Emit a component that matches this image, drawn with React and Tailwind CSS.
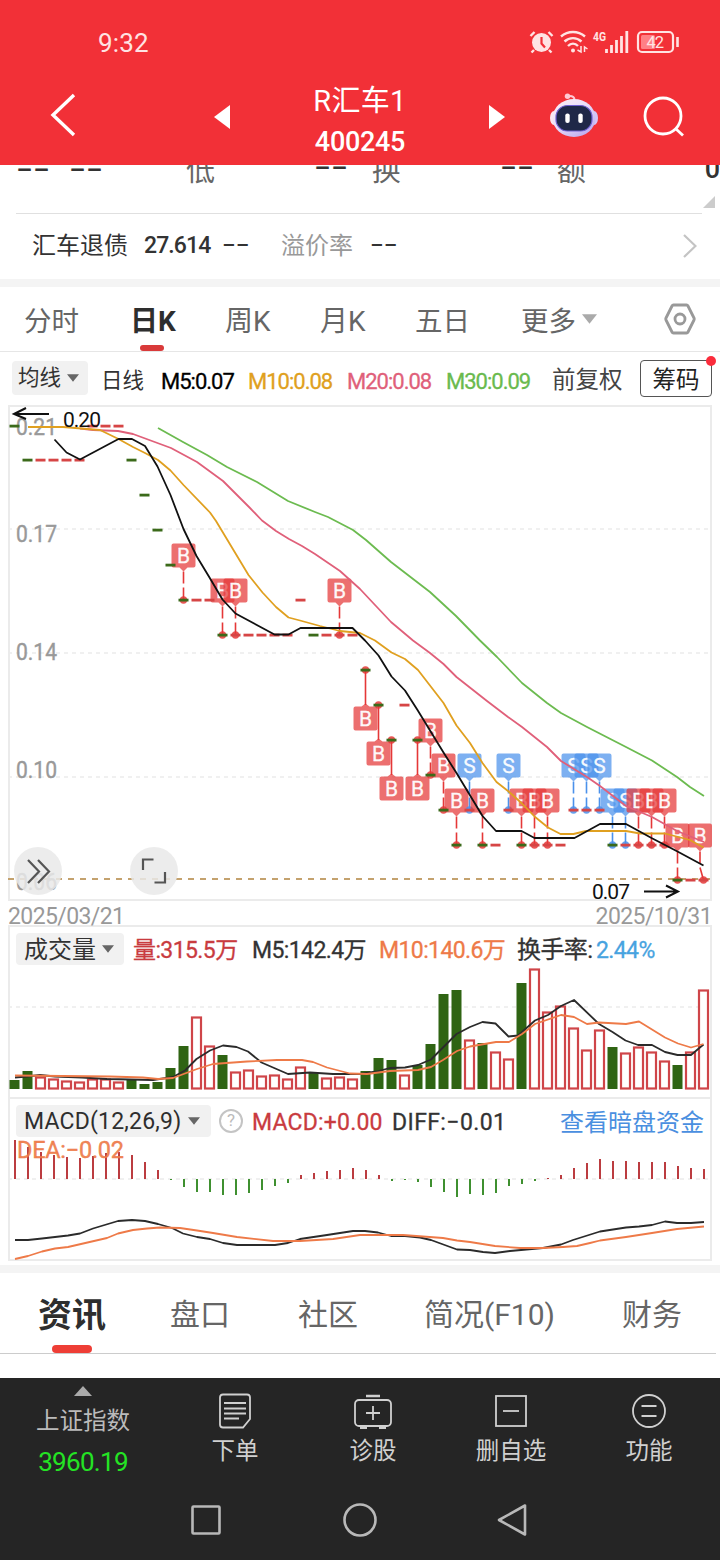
import React from 'react';
import clsx from 'clsx';

const RED = '#d64545';
const GREEN = '#2f6413';

// one candle every 13px
const X = (i) => 14.5 + i * 13;

// [price level y, colour, marker]
const candles = [
  [426, 'g'], [460, 'g'], [460, 'r'], [460, 'r'], [460, 'r'], [460, 'r'], [426, 'r'], [426, 'r'], [426, 'r'],
  [460, 'g'], [495, 'g'], [530, 'g'], [565, 'g'], [600, 'g', 'B'], [600, 'r'], [600, 'r'], [635, 'g', 'B'],
  [635, 'r', 'B'], [635, 'r'], [635, 'r'], [635, 'r'], [635, 'r'], [600, 'r'], [635, 'g'], [635, 'r'],
  [635, 'r', 'B'], [635, 'r'], [670, 'g', 'b'], [705, 'g', 'b'], [740, 'g', 'b'], [705, 'r'], [740, 'g', 'b'],
  [775, 'g', 'B'], [810, 'g', 'B'], [845, 'g', 'B'], [810, 'r', 'S'], [845, 'g', 'B'], [845, 'r'], [810, 'r', 'S'],
  [845, 'g', 'B'], [845, 'r', 'B'], [845, 'r', 'B'], [845, 'r'], [810, 'r', 'S'], [810, 'r', 'S'], [810, 'r', 'S'],
  [845, 'g', 'S'], [845, 'r', 'S'], [845, 'r', 'B'], [845, 'r', 'B'], [845, 'r', 'B'], [880, 'g', 'B'], [880, 'r'],
  [880, 'r', 'B']
];

const priceLines = [
  {
    color: '#6cbb50',
    points: '158,428 183,442 207,455 227,467 257,482 288,501 315,512 328,517 353,530 366,540 391,562 430,592 456,616 480,640.5 497,657 522,683 547,703 561,713 587,727 626,747 652,760.5 677,777 690,787 704,796'
  },
  {
    color: '#e0607a',
    points: '80,428.5 93,430 118,431 133,434 171,448 197,462 223,481 250,508 262,520.5 276,531 289,539 302,546 315,554 340,571 360,589 391,622 413,640.5 430,653 443.5,664 456.5,677 487,701 508,717 522,727 547,747 561,761 587,777 600,786 626,806 652,817 677,831 704,842'
  },
  {
    color: '#e0a020',
    points: '28,427 63,427 100,430 118.5,439 133,447 145,453 158,460 170.5,470.5 183.5,485 210,512.5 216,521 248.5,575 262.5,592.5 276,607 288.5,617.5 300,620.5 320,626 340,631 360,633 375,640.5 391.5,652.5 405,659 418,670 443.5,703 456.5,725.5 470,743 482.5,763 496.5,782 508,791 521.5,803 534.5,816.5 548,827.5 560.5,834 573.5,834 586,831 626,831 640,833.5 665,833.5 690,840 703.5,847.5'
  },
  {
    color: '#111111',
    points: '54.5,439.5 66.5,452.5 80,459.5 118.5,439 132,439 145,446 157.5,466.5 170.5,495 183.5,529 196.5,556 209.5,577.5 222.5,599.5 235.5,613.5 274.5,634.5 288.5,634.5 300.5,628 352.5,628 365,640.5 378.5,655.5 391.5,676.5 405,690.5 417.5,710 443.5,752.5 456.5,773 482.5,816 496,831 521.5,831 534.5,838 574.5,838 600,824 626,824 651.5,838 677.5,851.5 703.5,865.5'
  }
];

const volumes = [
  [1080, 'g'], [1071, 'g'], [1077, 'r'], [1079, 'r'], [1081, 'r'], [1082, 'r'], [1079, 'r'], [1079, 'r'], [1082, 'r'],
  [1080, 'g'], [1084, 'g'], [1082, 'g'], [1068, 'g'], [1046, 'g'], [1017, 'r'], [1046, 'r'], [1055, 'g'], [1072, 'r'],
  [1070, 'r'], [1076, 'r'], [1075, 'r'], [1079, 'r'], [1067, 'r'], [1073, 'g'], [1078, 'r'], [1077, 'r'], [1079, 'r'],
  [1071, 'g'], [1058, 'g'], [1060, 'g'], [1075, 'r'], [1065, 'g'], [1044, 'g'], [994, 'g'], [990, 'g'], [1040, 'r'],
  [1043, 'g'], [1052, 'r'], [1059, 'r'], [983, 'g'], [969, 'r'], [1012, 'r'], [1006, 'r'], [1028, 'r'], [1050, 'r'],
  [1030, 'r'], [1047, 'g'], [1053, 'r'], [1047, 'r'], [1052, 'r'], [1061, 'r'], [1065, 'g'], [1052, 'r'], [990, 'r']
];

const macdBars = [
  1140, 1147, 1152, 1155, 1157, 1158, 1156, 1153, 1152, 1155, 1162, 1170, 1180, 1187, 1192, 1192, 1195, 1195, 1193,
  1190, 1186, 1183, 1175, 1173, 1171, 1170, 1168, 1170, 1175, 1181, 1180, 1182, 1187, 1192, 1197, 1194, 1195, 1193,
  1186, 1184, 1181, 1178, 1175, 1168, 1163, 1159, 1161, 1161, 1162, 1162, 1162, 1166, 1168, 1169
];

const Line = ({ points, color }) => (
  <polyline points={points} fill="none" stroke={color} strokeWidth="1.8" strokeLinejoin="round" />
);

const Marker = ({ x, y, type }) => {
  const below = type === 'b';
  const color = type === 'S' ? '#4b91eb' : '#e53838';
  const bx = x > 700 ? 700 : x;
  const by = below ? y + 48.5 : y - 44.5;
  return (
    <g>
      {below ? (
        <line x1={x} y1={y} x2={x} y2={y + 35} stroke={color} strokeWidth="1.6" />
      ) : (
        <path d={`M${bx} ${by + 16} L${bx} ${by + 28} M${bx} ${by + 32} L${x} ${y}`} stroke={color} strokeWidth="1.6" />
      )}
      <circle cx={x} cy={y} r="3.7" fill={color} opacity="0.85" />
      <g fill={color} fillOpacity="0.72">
        <path
          d={
            below
              ? `M${bx - 10} ${by - 12}h6l4 -3l4 3h6a2 2 0 0 1 2 2v20a2 2 0 0 1 -2 2h-20a2 2 0 0 1 -2 -2v-20a2 2 0 0 1 2 -2z`
              : `M${bx - 10} ${by - 12}h20a2 2 0 0 1 2 2v20a2 2 0 0 1 -2 2h-6l-4 4l-4 -4h-6a2 2 0 0 1 -2 -2v-20a2 2 0 0 1 2 -2z`
          }
        />
      </g>
      <text x={bx} y={by + 7.5} textAnchor="middle" fontSize="21" fill="#fff" stroke="#fff" strokeWidth="0.3" fillOpacity="0.95">
        {type.toUpperCase()}
      </text>
    </g>
  );
};

const PriceChart = () => (
  <svg viewBox="10 407 700 492" className="block h-[492px] w-[700px] overflow-visible">
    {[529, 653, 777].map((y) => (
      <line key={y} x1="8" x2="710" y1={y} y2={y} stroke="#ebebeb" strokeWidth="1.6" strokeDasharray="4 4" />
    ))}
    <line x1="8" x2="710" y1="879" y2="879" stroke="#c4a26e" strokeWidth="1.8" strokeDasharray="6 6" />
    <g fill="#999" stroke="#999" strokeWidth="0.4" fontSize="23">
      <text x="16" y="434.5" textLength="41" lengthAdjust="spacingAndGlyphs">0.21</text>
      <text x="16" y="541.5" textLength="41" lengthAdjust="spacingAndGlyphs">0.17</text>
      <text x="16" y="659.5" textLength="41" lengthAdjust="spacingAndGlyphs">0.14</text>
      <text x="16" y="777.5" textLength="41" lengthAdjust="spacingAndGlyphs">0.10</text>
      <text x="16" y="889.5" textLength="41" lengthAdjust="spacingAndGlyphs">0.06</text>
    </g>
    {candles.map(([y, c, m], i) => m && <Marker key={i} x={X(i)} y={y} type={m} />)}
    {candles.map(([y, c], i) => (
      <rect key={i} x={X(i) - 5} y={y - 1.3} width="10" height="2.8" fill={c === 'g' ? '#3b6a1a' : RED} />
    ))}
    {priceLines.map((l) => (
      <Line key={l.color} {...l} />
    ))}
    <g fontSize="21" fill="#111">
      <text x="63" y="427" textLength="38">0.20</text>
      <text x="592" y="899" textLength="38">0.07</text>
    </g>
    <g fill="none" stroke="#111" strokeWidth="2">
      <path d="M49 414H15M26 408L14 414l12 5" />
      <path d="M644 891.500H677M666 885.500l12 6l-12 6" />
    </g>
    <circle cx="38" cy="871" r="24" fill="#e9e9e9" fillOpacity="0.85" />
    <circle cx="154" cy="871" r="24" fill="#e9e9e9" fillOpacity="0.85" />
    <g fill="none" stroke="#555" strokeWidth="2.2">
      <path d="M28 860l11 11.500L28 883M38 860l11 11.500L38 883" />
      <path d="M143 870v-10.500h10.500M165 872v10.500h-10.500" />
    </g>
  </svg>
);

const VolumeChart = () => (
  <svg viewBox="10 967 700 130" className="block h-[130px] w-[700px] overflow-visible">
    <line x1="8" x2="710" y1="1007" y2="1007" stroke="#ebebeb" strokeWidth="1.6" strokeDasharray="4 4" />
    {volumes.map(([y, c], i) =>
      c === 'g' ? (
        <rect key={i} x={X(i) - 5} y={y} width="10" height={1089 - y} fill={GREEN} />
      ) : (
        <rect key={i} x={X(i) - 4.5} y={y + 0.5} width="9" height={1088 - y} fill="#fff" stroke="#cf4549" strokeWidth="2.2" />
      )
    )}
    <Line
      color="#2b2b2b"
      points="15,1077.500 27,1076.500 40,1075 55,1076.500 82,1077.500 107,1079 153,1080 173,1077 185,1070.500 196.500,1059 210,1050.500 223,1045.500 236.500,1047 248,1051.500 261.500,1062.500 288,1074 310,1072.500 333,1074 360,1074 376.500,1071.500 390,1068 405,1067.500 418,1065 431,1059.500 456.500,1034 470,1027 482.500,1022 495.500,1023.500 508.500,1036.500 518,1035.500 535,1020.500 548,1015 561,1006 574,1000 599,1024 612.500,1032 625.500,1040.500 638,1045 652,1045 665,1052 677.500,1055 691,1055 703.500,1044.500"
    />
    <Line
      color="#ee7a48"
      points="15,1075.500 110,1076.500 143,1077.500 158,1079 173,1078 197,1069 213,1064 247,1061.500 277,1060 302,1060 313,1062 327,1067.500 350,1073.500 367,1074 390,1071 418,1070 431,1067 443,1060 457,1051 470,1046.500 496,1042 509,1042 522,1034 535,1024 561,1015 574,1017 587,1024 599,1022.500 626,1024 639,1021.500 665,1037.500 678,1043.500 691,1047.500 703.500,1044"
    />
  </svg>
);

const MacdChart = () => (
  <svg viewBox="10 1137 700 122" className="block h-[122px] w-[700px] overflow-visible">
    <line x1="8" x2="710" y1="1179" y2="1179" stroke="#ebebeb" strokeWidth="1.6" strokeDasharray="4 4" />
    {macdBars.map((y, i) => (
      <rect
        key={i}
        x={X(i) - 0.5}
        y={Math.min(y, 1179)}
        width="2"
        height={Math.abs(1179 - y)}
        fill={y > 1179 ? '#3f9030' : '#bb3c40'}
      />
    ))}
    <text x="17" y="1157.500" fontSize="23.500" fill="#ee7a48" stroke="#ee7a48" strokeWidth="0.4" fillOpacity="0.93" textLength="107">DEA:−0.02</text>
    <Line
      color="#2b2b2b"
      points="15,1240 28,1240 42,1238.500 55,1237 68,1235.500 80,1233.500 93,1228.500 118,1221 132,1220 145,1221 158,1224 172,1228 183,1233.500 197,1237 210,1239 223,1243 237,1245 275,1245 288,1243 300,1239 327,1235 353,1231 365,1231 378,1232.500 391,1236 405,1236 420,1237.500 431,1240 457,1249.500 470,1250 483,1252 495,1253 510,1251 543,1248 561,1244.500 573,1240 600,1231.500 626,1227.500 639,1226.500 652,1225 665,1221.500 677,1223 691,1223 704,1222"
    />
    <Line
      color="#ee7a48"
      points="15,1259 28,1256 42,1251.500 55,1248.500 68,1247 107,1238 118,1233.500 133,1230 147,1228.500 160,1227.500 180,1228 197,1230.500 213,1233 237,1237 273,1241 300,1241 333,1239 360,1235 403,1235 443,1238 457,1240.500 470,1242 495,1246 520,1248 543,1248 563,1247 577,1246 590,1243 600,1240.500 626,1237 652,1233 677,1229 704,1226.500"
    />
  </svg>
);

const Caret = ({ className }) => (
  <svg viewBox="0 0 14 10" className={clsx('shrink-0', className)} fill="currentColor">
    <path d="M0 .5h14L7 9.500z" />
  </svg>
);

const StatusBar = () => (
  <div className="flex h-20 items-start pt-[27px] text-[#ffe3e3]">
    <span className="ml-[98px] w-[431px] text-[26px] leading-[32px] tracking-[0.2px]">9:32</span>
    <svg viewBox="0 0 150 24" className="mt-[3px] h-6 w-[150px]" fill="none" stroke="currentColor">
      {/* alarm */}
      <circle cx="12.500" cy="12.500" r="9.500" fill="currentColor" stroke="none" />
      <path d="M1.500 6l4-4M23.500 6l-4-4M5 20l-2.500 2.500M20 20l2.500 2.500" strokeWidth="2.400" />
      <path d="M12.500 7v6.500l3.500 4" stroke="#f23037" strokeWidth="2.200" />
      {/* wifi */}
      <path d="M32 6.500c7-6 17-6 24 0M35.500 11.500c5-4.500 12-4.500 17 0M39 16c3-3 7-3 10 0" strokeWidth="2.400" />
      <circle cx="44" cy="20.500" r="2" fill="currentColor" stroke="none" />
      <path d="M52 16v6l-3.500-2M55.500 22v-5l3 2" strokeWidth="1.500" />
      <text x="64" y="10.500" fontSize="12.500" fontWeight="700" fill="currentColor" stroke="none" textLength="13" lengthAdjust="spacingAndGlyphs">4G</text>
      <path d="M77.500 19v4M82.500 15v8M87.500 10v13M92.500 6v17M97.800 1v22" strokeWidth="2.800" />
      <rect x="109" y="2" width="35" height="20" rx="4" strokeWidth="2.200" />
      <rect x="112" y="5" width="14" height="14" rx="1.500" fill="#ff8085" stroke="none" />
      <path d="M148.500 7v10" strokeWidth="2.600" />
      <text x="117.500" y="18" fontSize="16.500" fill="currentColor" stroke="none" textLength="17.500">42</text>
    </svg>
  </div>
);

const RobotIcon = () => (
  <svg viewBox="0 0 48 46" className="ml-[45px] h-[46px] w-12 shrink-0">
    <defs>
      <linearGradient id="shell" x1="0" y1="0" x2="0.8" y2="1">
        <stop offset="0" stopColor="#fff0f3" />
        <stop offset="0.5" stopColor="#e8dcfa" />
        <stop offset="1" stopColor="#bba8ee" />
      </linearGradient>
    </defs>
    <path d="M24.500 7c0-3-2-4-5-4" fill="none" stroke="#ffc9d4" strokeWidth="2" />
    <circle cx="17.500" cy="3.200" r="2.700" fill="#ffc9d4" />
    <ellipse cx="4" cy="25" rx="4" ry="7" fill="#fbe6f0" />
    <ellipse cx="44" cy="25" rx="4" ry="7" fill="#d3c4f6" />
    <ellipse cx="24" cy="25" rx="21.500" ry="19" fill="url(#shell)" />
    <rect x="6" y="12.500" width="36" height="25.500" rx="11.500" fill="#1f2848" stroke="#6f5fd0" strokeWidth="1.200" />
    <rect x="15.300" y="20.500" width="4.400" height="9.500" rx="2" fill="#fff" />
    <rect x="28.300" y="20.500" width="4.400" height="9.500" rx="2" fill="#fff" />
  </svg>
);

const NavBar = () => (
  <div className="flex h-[85px] items-start text-white">
    <svg viewBox="0 0 26 44" className="ml-[50px] mt-[13px] h-11 w-[26px]" fill="none" stroke="currentColor" strokeWidth="3.400">
      <path d="M24 2L3 22l21 20" />
    </svg>
    <svg viewBox="0 0 16 24" className="ml-[138px] mt-[25px] h-6 w-4" fill="currentColor">
      <path d="M16 0v24L0 12z" />
    </svg>
    <div className="ml-[30px] flex w-[200px] flex-col items-center pt-[1px]">
      <span className="text-[29px] leading-[40px] tracking-[0.3px]">R汇车1</span>
      <span className="mt-px text-[27px] font-medium leading-[40px] tracking-[-0.3px]">400245</span>
    </div>
    <svg viewBox="0 0 16 24" className="ml-[29px] mt-[25px] h-6 w-4" fill="currentColor">
      <path d="M0 0v24l16-12z" />
    </svg>
    <div className="mt-[13px] flex items-start">
      <RobotIcon />
    </div>
    <svg viewBox="0 0 42 42" className="ml-[45px] mt-[16px] h-[42px] w-[42px]" fill="none" stroke="currentColor" strokeWidth="2.800">
      <circle cx="20" cy="20" r="18" />
      <path d="M32.500 32.500l7.500 7" />
    </svg>
  </div>
);

const Dash = ({ className }) => (
  <span className={clsx('inline-block origin-left scale-x-[1.6] whitespace-nowrap font-[Liberation_Sans]', className)}>--</span>
);

const StatsRow = () => (
  <div className="flex h-12 items-start overflow-hidden text-[29px] leading-[40px] text-[#666]">
    <div className="-mt-[18px] flex w-full items-start whitespace-nowrap">
      <Dash className="ml-[16px] w-[53px] text-[32px] text-[#333]" />
      <Dash className="w-[117px] text-[32px] text-[#333]" />
      <span className="mt-1 w-[128px]">低</span>
      <Dash className="-mt-0.5 w-[58px] text-[32px] text-[#333]" />
      <span className="mt-1 w-[128px]">换</span>
      <Dash className="-mt-0.5 w-[57px] text-[32px] text-[#333]" />
      <span className="mt-1 w-[148px]">额</span>
      <span className="mt-0.5 text-[27px] font-medium text-[#333]">0</span>
    </div>
    <svg viewBox="0 0 12 12" className="-ml-[17px] mt-[31px] h-3 w-3 shrink-0" fill="#ccc">
      <path d="M12 0v12H0z" />
    </svg>
  </div>
);

const BondRow = () => (
  <div className="flex h-[65px] items-center whitespace-nowrap pb-0.5 text-2xl text-[#333]">
    <span className="ml-8 w-[112px]">汇车退债</span>
    <span className="mt-0.5 w-[78px] text-[23px] font-medium tracking-[-0.9px]">27.614</span>
    <Dash className="-mt-1 w-[59px] text-[26px]" />
    <span className="w-[89px] text-[#999]">溢价率</span>
    <Dash className="-mt-1 text-[26px]" />
    <svg viewBox="0 0 14 24" className="ml-auto mr-[23px] h-6 w-[14px]" fill="none" stroke="#c4c4c4" strokeWidth="2.200">
      <path d="M1 1l11.500 11L1 23" />
    </svg>
  </div>
);

const PeriodTabs = () => (
  <div className="flex h-[65px] items-start whitespace-nowrap border-b border-[#e6e6e6] pt-[15px] text-[27.500px] leading-[40px] text-[#666]">
    <span className="ml-[24px] w-[106px]">分时</span>
    <div className="relative w-[95px] text-[28px] font-bold text-[#2e2e2e]">
      日K
      <div className="absolute left-[10px] top-[43px] h-1.5 w-6 rounded-full bg-[#d93a3a]" />
    </div>
    <span className="w-[95px] text-[28px]">周K</span>
    <span className="w-[95px] text-[28px]">月K</span>
    <span className="w-[106px]">五日</span>
    <span className="w-[61px]">更多</span>
    <Caret className="mt-[10px] h-[14px] w-[15px] text-[#aaa]" />
    <svg viewBox="0 0 32 32" className="ml-[67px] mt-px h-8 w-8" fill="none" stroke="#999" strokeWidth="2.800">
      <path d="M9.500 2h13q1 0 1.500 1l6 12q.5 1 0 2l-6 12q-.5 1-1.500 1h-13q-1 0-1.500-1l-6-12q-.5-1 0-2l6-12q.5-1 1.500-1z" />
      <circle cx="16" cy="16" r="5" />
    </svg>
  </div>
);

const AverageRow = () => (
  <div className="flex h-[53px] items-center whitespace-nowrap pt-0.5 text-[22px] tracking-[-1px]">
    <div className="-mt-1 ml-3 flex h-[34px] w-[76px] items-center rounded-sm bg-[#f1f1f1] pl-1.5 text-[21.500px] tracking-normal text-[#333]">
      <span className="mt-0.5">均线</span>
      <Caret className="ml-1.5 h-2.5 w-3 text-[#666]" />
    </div>
    <span className="ml-[13px] mt-1 w-[60px] text-[21.500px] tracking-normal text-[#333]">日线</span>
    <span className="mt-1 w-[87px] text-black [-webkit-text-stroke:0.3px]">M5:0.07</span>
    <span className="mt-1 w-[99px] text-[#e0a020] [-webkit-text-stroke:0.3px]">M10:0.08</span>
    <span className="mt-1 w-[99px] text-[#e0607a] [-webkit-text-stroke:0.3px]">M20:0.08</span>
    <span className="mt-1 w-[106px] text-[#6aba4e] [-webkit-text-stroke:0.3px]">M30:0.09</span>
    <span className="mt-0.5 w-[88px] text-[23.500px] tracking-normal text-[#444]">前复权</span>
    <div className="relative -mt-0.5 flex h-[37px] w-[72px] items-center justify-center rounded border border-[#555] text-[23.500px] tracking-normal text-[#222]">
      <span className="mt-1">筹码</span>
      <div className="absolute -right-[5px] -top-[5px] h-2.5 w-2.5 rounded-full bg-[#fb2c3c]" />
    </div>
  </div>
);

const VolumePanel = () => (
  <div className="mx-2 h-[172px] border-2 border-b-0 border-[#ebebeb]">
    <div className="flex h-10 items-center whitespace-nowrap text-[23px] tracking-[-0.6px]">
      <div className="ml-1.5 mt-1 flex h-8 w-[108px] items-center rounded bg-[#f1f1f1] pl-2 text-2xl tracking-normal text-[#333]">
        <span className="mt-0.5">成交量</span>
        <Caret className="ml-1.5 h-2.5 w-3 text-[#666]" />
      </div>
      <div className="ml-[9px] flex pt-2 [-webkit-text-stroke:0.3px]">
        <span className="w-[119px] text-[#c93b3f]">量:315.5万</span>
        <span className="w-[127px] text-[#333]">M5:142.4万</span>
        <span className="w-[138px] text-[#ee7a48]">M10:140.6万</span>
        <span className="w-[79px] text-2xl text-[#333]">换手率:</span>
        <span className="text-[#47a3e0]">2.44%</span>
      </div>
    </div>
    <VolumeChart />
  </div>
);

const MacdPanel = () => (
  <div className="mx-2 h-[164px] border-2 border-[#ebebeb]">
    <div className="flex h-[38px] items-center whitespace-nowrap pt-[5px] text-[23px]">
      <div className="ml-1.5 flex h-8 w-[195px] items-center rounded bg-[#f1f1f1] pl-2 text-[#2e2e2e]">
        <span className="mt-1 w-[158px] tracking-[0.2px]">MACD(12,26,9)</span>
        <Caret className="ml-1.5 h-2.5 w-3 text-[#666]" />
      </div>
      <div className="ml-2 flex h-6 w-6 items-center justify-center rounded-full border-2 border-[#c4c4c4] text-[17px] text-[#bbb]">?</div>
      <span className="ml-[9px] mt-[5px] w-[140px] tracking-[0.2px] text-[#c93b3f] [-webkit-text-stroke:0.3px]">MACD:+0.00</span>
      <span className="mt-[5px] w-[168px] tracking-[0.4px] text-[#333] [-webkit-text-stroke:0.3px]">DIFF:−0.01</span>
      <span className="mt-[5px] text-2xl text-[#4a8fe0]">查看暗盘资金</span>
    </div>
    <MacdChart />
  </div>
);

const InfoTabs = () => (
  <div className="flex h-20 items-start whitespace-nowrap pt-5 text-[30px] leading-[44px] text-[#666]">
    <div className="relative ml-[38px] w-[132px] text-[34px] font-bold text-[#2e2e2e]">
      资讯
      <div className="absolute left-[14px] top-[52px] h-2 w-10 rounded-full bg-[#ee3e36]" />
    </div>
    <span className="w-[128px]">盘口</span>
    <span className="w-[126px]">社区</span>
    <span className="w-[198px]">简况(F10)</span>
    <span>财务</span>
  </div>
);

const actions = [
  {
    label: '下单',
    icon: (
      <>
        <path d="M6 2.500h24q3 0 3 3V27l-7 8.500H6q-3 0-3-3v-27q0-3 3-3z" />
        <path d="M7 11h22M7 16.500h22M7 21.500h22M7 26.500h15" />
      </>
    )
  },
  {
    label: '诊股',
    icon: (
      <>
        <path d="M11 4h14" strokeWidth="2.500" />
        <rect x="0" y="8" width="36" height="26" rx="4" />
        <path d="M5 35.500h7M24 35.500h7" strokeWidth="3" />
        <path d="M18 14v14M11 21h14" />
      </>
    )
  },
  {
    label: '删自选',
    icon: (
      <>
        <rect x="3" y="4" width="30" height="30" />
        <path d="M10 19h16" />
      </>
    )
  },
  {
    label: '功能',
    icon: (
      <>
        <circle cx="18" cy="19" r="16" />
        <path d="M10.500 14h15M10.500 24h15" />
      </>
    )
  }
];

const BottomBar = () => (
  <div className="h-[182px] bg-[#252525] text-[#d0d0d0]">
    <div className="flex h-[106px]">
      <div className="flex w-[166px] flex-col items-center">
        <svg viewBox="0 0 18 10" className="mt-[8px] h-2.5 w-[18px]" fill="#aaa">
          <path d="M9 0l9 10H0z" />
        </svg>
        <span className="mt-[5px] text-[23.500px] leading-[40px] text-[#bbb]">上证指数</span>
        <span className="text-[26px] leading-[42px] tracking-[-0.7px] text-[#24e324]">3960.19</span>
      </div>
      {actions.map((a) => (
        <div key={a.label} className="flex w-[138px] flex-col items-center pt-[14px]">
          <svg viewBox="0 0 36 38" className="h-[38px] w-9 overflow-visible" fill="none" stroke="currentColor" strokeWidth="1.800">
            {a.icon}
          </svg>
          <span className="mt-px text-[23.500px] leading-[40px]">{a.label}</span>
        </div>
      ))}
    </div>
    <svg viewBox="0 0 720 76" className="block h-[76px] w-full" fill="none" stroke="#b8b8b8" strokeWidth="2.600" strokeLinejoin="round">
      <rect x="192.500" y="22.500" width="27" height="27" rx="1" />
      <circle cx="360" cy="36" r="15.500" />
      <path d="M525 21.500v29L499 36z" />
    </svg>
  </div>
);

const App = () => {
  return (
    <div className="h-[1560px] w-[720px] overflow-hidden bg-white font-['Roboto','Noto_Sans_CJK_SC',sans-serif]">
      <div className="h-[165px] bg-[#f23037]">
        <StatusBar />
        <NavBar />
      </div>
      <StatsRow />
      <div className="ml-4 mr-[18px] h-px bg-[#e0e0e0]" />
      <BondRow />
      <div className="h-2 bg-[#f4f4f4]" />
      <PeriodTabs />
      <AverageRow />
      <div className="mx-2 border-2 border-[#ebebeb]">
        <PriceChart />
      </div>
      <div className="mx-2 flex h-6 items-center justify-between pt-[9px] text-[23px] tracking-[-0.6px] text-[#999]">
        <span>2025/03/21</span>
        <span>2025/10/31</span>
      </div>
      <VolumePanel />
      <MacdPanel />
      <div className="mt-1 h-2 bg-[#f4f4f4]" />
      <InfoTabs />
      <div className="mb-6 mr-1 h-px bg-[#ccc]" />
      <BottomBar />
    </div>
  );
};

export default App;
